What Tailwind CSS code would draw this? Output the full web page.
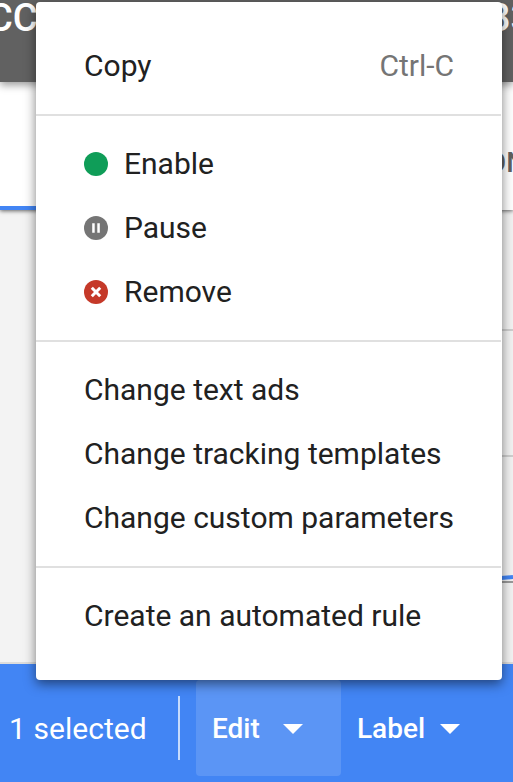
<!DOCTYPE html>
<html lang="en">
<head>
    <meta charset="UTF-8">
    <meta name="viewport" content="width=device-width, initial-scale=1.0">
    <title>Ads</title>
    <script src="https://cdn.jsdelivr.net/npm/@tailwindcss/browser@4"></script>
</head>
<body class="font-[Roboto,sans-serif] overflow-hidden">
    <div class="relative w-[513px] h-[782px] overflow-hidden flex flex-col bg-[#f3f3f3]">
        <!-- Account header -->
        <header class="relative z-20 h-[82px] shrink-0 bg-[#616161] flex justify-between text-white text-[38px] leading-9 font-medium whitespace-nowrap shadow-[0_3px_8px_rgba(0,0,0,0.4)]">
            <span class="-ml-3">CC</span>
            <span class="-mr-[19px]">83</span>
        </header>

        <!-- Tabs -->
        <nav class="relative z-10 h-32 shrink-0 bg-white flex justify-between shadow-[0_1px_4px_rgba(0,0,0,0.6)]">
            <div class="w-20 border-b-4 border-[#4285f4]"></div>
            <div class="-mr-[13px] pt-[65px] text-[28px] leading-8 font-medium text-[#616161]">ON</div>
        </nav>

        <!-- Chart area -->
        <main class="flex-1 flex flex-col items-end bg-[#f3f3f3]">
            <div class="w-20 h-[121px] border-b-2 border-[#cfcfcf]"></div>
            <div class="w-20 h-[126px] border-b-2 border-[#cfcfcf]"></div>
            <svg class="w-20 h-[126px]" viewBox="0 0 80 126">
                <path d="M0 125H80" stroke="#999" stroke-width="2"/>
                <path d="M0 125 L68 121 L80 120" stroke="#4285f4" stroke-width="4" fill="none"/>
            </svg>
        </main>

        <!-- Selection bar -->
        <footer class="h-[120px] shrink-0 border-t-2 border-[#dcdcdc] bg-[#4285f4] flex items-start text-white text-[28px] leading-8">
            <span class="w-[178px] pl-[9px] pt-[49px] text-[30px] tracking-[0.05px]">1 selected</span>
            <span class="mt-8 w-0.5 h-16 bg-white/70"></span>
            <button class="ml-4 mt-4 w-[145px] h-24 rounded bg-white/13 pl-4 flex items-center font-medium">
                <span class="w-[71px] pt-0.5 text-left">Edit</span>
                <svg class="w-5 h-2.5 mt-0.5" viewBox="0 0 20 10" fill="#fff"><path d="M0 0H20L10 10Z"/></svg>
            </button>
            <button class="mt-4 h-24 pl-4 flex items-center font-medium">
                <span class="w-[83px] pt-0.5 text-left">Label</span>
                <svg class="w-5 h-2.5 mt-0.5" viewBox="0 0 20 10" fill="#fff"><path d="M0 0H20L10 10Z"/></svg>
            </button>
        </footer>

        <!-- Edit menu -->
        <div class="absolute z-30 left-9 top-0.5 w-[466px] h-[678px] py-8 rounded bg-white text-[#212121] text-[30px] leading-16 whitespace-nowrap shadow-[0_4px_12px_rgba(0,0,0,0.5)]">
            <div class="h-16 px-12 flex justify-between">
                <span>Copy</span>
                <span class="text-[#757575]">Ctrl-C</span>
            </div>
            <div class="my-4 mr-px h-0.5 bg-[#e0e0e0]"></div>
            <div class="h-16 px-12 flex items-center gap-4">
                <svg class="size-6" viewBox="0 0 24 24"><circle cx="12" cy="12" r="12" fill="#0f9d58"/></svg>
                <span>Enable</span>
            </div>
            <div class="h-16 px-12 flex items-center gap-4">
                <svg class="size-6" viewBox="0 0 24 24"><circle cx="12" cy="12" r="12" fill="#757575"/><path d="M8.2 7.2h2.5v9.6H8.2zM13.3 7.2h2.5v9.6h-2.5z" fill="#fff"/></svg>
                <span>Pause</span>
            </div>
            <div class="h-16 px-12 flex items-center gap-4">
                <svg class="size-6" viewBox="0 0 24 24"><circle cx="12" cy="12" r="12" fill="#c53929"/><path d="M7.8 7.8l8.4 8.4M16.2 7.8l-8.4 8.4" stroke="#fff" stroke-width="3"/></svg>
                <span>Remove</span>
            </div>
            <div class="my-4 mr-px h-0.5 bg-[#e0e0e0]"></div>
            <div class="h-16 px-12">Change text ads</div>
            <div class="h-16 px-12">Change tracking templates</div>
            <div class="h-16 px-12">Change custom parameters</div>
            <div class="my-4 mr-px h-0.5 bg-[#e0e0e0]"></div>
            <div class="h-16 px-12">Create an automated rule</div>
        </div>
    </div>
</body>
</html>
